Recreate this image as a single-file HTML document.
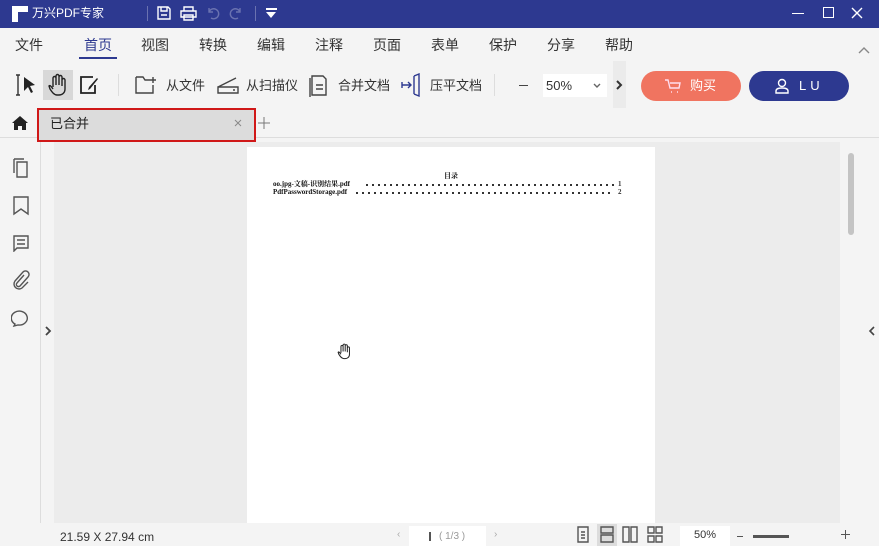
<!DOCTYPE html>
<html><head><meta charset="utf-8"><style>
*{margin:0;padding:0;box-sizing:border-box}
body{width:879px;height:546px;overflow:hidden;background:#f4f4f4;font-family:"Liberation Sans","Noto Sans CJK SC",sans-serif;position:relative;color:#333}
.a{position:absolute}
.t{position:absolute;font-size:13px;white-space:nowrap;line-height:1}
.m{position:absolute;font-size:14px;white-space:nowrap;line-height:1;top:38px}
svg{position:absolute;fill:none;stroke:#444;stroke-width:1.4}
</style></head><body>
<!-- title bar -->
<div class="a" style="left:0;top:0;width:879px;height:28px;background:#2d3990"></div>
<div class="a" style="left:12px;top:6px;width:14px;height:6px;background:#fff"></div>
<div class="a" style="left:12px;top:12px;width:6px;height:10px;background:#fff"></div>
<div class="a" style="left:19px;top:6px;width:9px;height:6px;background:#fff"></div>
<div class="t" style="left:32px;top:7px;color:#fff;font-size:12px">万兴PDF专家</div>
<div class="a" style="left:147px;top:6px;width:1px;height:15px;background:#6a72b0"></div>
<svg style="left:156px;top:5px" width="16" height="16" viewBox="0 0 16 16"><path d="M2 2h10l2 2v10H2z M5 2v4h6V2 M5 10h6" stroke="#fff"/></svg>
<svg style="left:180px;top:5px" width="17" height="16" viewBox="0 0 17 16"><path d="M4 6V2h9v4 M1 6h15v6H1z M4 10h9v5H4z" stroke="#fff"/></svg>
<svg style="left:206px;top:6px" width="14" height="14" viewBox="0 0 14 14"><path d="M3 2v4h4 M3 6a5 5 0 1 1 2 6" stroke="#6a72b0"/></svg>
<svg style="left:229px;top:6px" width="14" height="14" viewBox="0 0 14 14"><path d="M11 2v4H7 M11 6a5 5 0 1 0-2 6" stroke="#6a72b0"/></svg>
<div class="a" style="left:255px;top:6px;width:1px;height:15px;background:#6a72b0"></div>
<div class="a" style="left:266px;top:8px;width:11px;height:2px;background:#fff"></div>
<div class="a" style="left:266px;top:12px;width:0;height:0;border-left:5.5px solid transparent;border-right:5.5px solid transparent;border-top:6px solid #fff"></div>
<div class="a" style="left:792px;top:13px;width:12px;height:1px;background:#fff"></div>
<div class="a" style="left:823px;top:7px;width:11px;height:11px;border:1.3px solid #fff"></div>
<svg style="left:851px;top:7px" width="12" height="12" viewBox="0 0 12 12"><path d="M1 1l10 10M11 1L1 11" stroke="#fff"/></svg>
<!-- menu -->
<div class="m" style="left:15px">文件</div>
<div class="m" style="left:84px;color:#2d3990">首页</div>
<div class="a" style="left:79px;top:57px;width:38px;height:2px;background:#2d3990"></div>
<div class="m" style="left:141px">视图</div>
<div class="m" style="left:199px">转换</div>
<div class="m" style="left:257px">编辑</div>
<div class="m" style="left:315px">注释</div>
<div class="m" style="left:373px">页面</div>
<div class="m" style="left:431px">表单</div>
<div class="m" style="left:489px">保护</div>
<div class="m" style="left:547px">分享</div>
<div class="m" style="left:605px">帮助</div>
<svg style="left:858px;top:46px" width="12" height="8" viewBox="0 0 12 8"><path d="M1 7l5-5 5 5" stroke="#888"/></svg>
<!-- toolbar -->
<svg style="left:14px;top:73px" width="24" height="24" viewBox="0 0 24 24"><path d="M2 2h4M4 2v20M2 22h4" stroke="#333"/><path d="M10 4l11 8-5 1 3 6-2 1-3-6-4 4z" fill="#222" stroke="none"/></svg>
<div class="a" style="left:43px;top:70px;width:30px;height:30px;background:#d8d8d8"></div>
<svg style="left:47px;top:73px" width="22" height="24" viewBox="0 0 22 24"><path d="M6 14V5a1.5 1.5 0 0 1 3 0v7V3a1.5 1.5 0 0 1 3 0v9V4a1.5 1.5 0 0 1 3 0v9V7a1.5 1.5 0 0 1 3 0v9c0 4-3 6-6 6h-2c-3 0-5-3-7-6l-1-3c1-1 2 0 4 3" stroke="#222"/></svg>
<svg style="left:78px;top:74px" width="24" height="22" viewBox="0 0 24 22"><path d="M15 3H3v16h14V11" stroke="#222" stroke-width="1.8"/><path d="M20 5l-8 10-2 1 1-3 8-9z" fill="#222" stroke="none"/></svg>
<div class="a" style="left:118px;top:74px;width:1px;height:22px;background:#ddd"></div>
<svg style="left:134px;top:74px" width="26" height="22" viewBox="0 0 26 22"><path d="M2 3h7l2 3h7 M2 3v16h17v-8 M19 3v6 M16 6h6" stroke="#444"/></svg>
<div class="t" style="left:166px;top:79px">从文件</div>
<svg style="left:216px;top:75px" width="24" height="20" viewBox="0 0 24 20"><path d="M2 12L20 3 M2 12h20v6H2z M17 15h2" stroke="#444"/></svg>
<div class="t" style="left:246px;top:79px">从扫描仪</div>
<svg style="left:309px;top:73px" width="20" height="24" viewBox="0 0 20 24"><path d="M3 3h11l3 3v16H3z M1 5v19 M7 12h7M7 16h7" stroke="#444"/></svg>
<div class="t" style="left:338px;top:79px">合并文档</div>
<svg style="left:400px;top:73px" width="22" height="24" viewBox="0 0 22 24"><path d="M14 3l5-2v22l-5-2 M14 3v18 M2 12h9M8 9l3 3-3 3 M2 9v6" stroke="#2d3990"/></svg>
<div class="t" style="left:430px;top:79px">压平文档</div>
<div class="a" style="left:494px;top:74px;width:1px;height:22px;background:#ddd"></div>
<div class="a" style="left:519px;top:85px;width:9px;height:1px;background:#444"></div>
<div class="a" style="left:543px;top:74px;width:64px;height:23px;background:#fff"></div>
<div class="t" style="left:546px;top:79px">50%</div>
<svg style="left:593px;top:83px" width="8" height="6" viewBox="0 0 8 6"><path d="M1 1l3 3 3-3" stroke="#666"/></svg>
<div class="a" style="left:613px;top:61px;width:13px;height:47px;background:#ebebeb"></div>
<svg style="left:615px;top:80px" width="8" height="10" viewBox="0 0 8 10"><path d="M2 1l4 4-4 4" stroke="#333" stroke-width="2"/></svg>
<div class="a" style="left:641px;top:71px;width:100px;height:30px;border-radius:15px;background:#f07460"></div>
<svg style="left:664px;top:78px" width="18" height="16" viewBox="0 0 18 16"><path d="M1 2h3l2 8h9l1-5H6 M7 14h1M13 14h1" stroke="#fde"/></svg>
<div class="t" style="left:690px;top:79px;color:#fff">购买</div>
<div class="a" style="left:749px;top:71px;width:100px;height:30px;border-radius:15px;background:#2d3990"></div>
<svg style="left:775px;top:78px" width="14" height="16" viewBox="0 0 14 16"><circle cx="7" cy="5" r="3.5" stroke="#fff"/><path d="M1 15v-2c0-2 2-3 6-3s6 1 6 3v2z" stroke="#fff"/></svg>
<div class="t" style="left:799px;top:79px;color:#fff;letter-spacing:4px">LU</div>
<!-- tabs -->
<div class="a" style="left:0;top:137px;width:879px;height:1px;background:#ddd"></div>
<svg style="left:11px;top:115px" width="18" height="16" viewBox="0 0 18 16"><path d="M9 1L1 8h2v7h4v-4h4v4h4V8h2z" fill="#222" stroke="none"/></svg>
<div class="a" style="left:37px;top:108px;width:219px;height:34px;border:2.5px solid #d01818;background:#dcdcdc"></div>
<div class="t" style="left:50px;top:117px;color:#222">已合并</div>
<svg style="left:234px;top:119px" width="8" height="8" viewBox="0 0 8 8"><path d="M1 1l6 6M7 1L1 7" stroke="#888" stroke-width="1"/></svg>
<svg style="left:258px;top:117px" width="12" height="12" viewBox="0 0 12 12"><path d="M6 0v12M0 6h12" stroke="#777" stroke-width="1"/></svg>
<!-- sidebar -->
<div class="a" style="left:40px;top:142px;width:1px;height:381px;background:#ddd"></div>
<svg style="left:12px;top:158px" width="18" height="20" viewBox="0 0 18 20"><path d="M2 1h10 M2 1v14 M5 4h10v15H5z" stroke="#555"/></svg>
<svg style="left:13px;top:196px" width="16" height="20" viewBox="0 0 16 20"><path d="M1 1h14v17l-7-5-7 5z" stroke="#555"/></svg>
<svg style="left:12px;top:234px" width="18" height="18" viewBox="0 0 18 18"><path d="M2 2h14v12H5l-3 3z M5 6h8M5 10h8" stroke="#555"/></svg>
<svg style="left:12px;top:270px" width="18" height="20" viewBox="0 0 18 20"><path d="M12 5l-7 8a2 2 0 0 0 3 3l8-9a3.5 3.5 0 0 0-5-5L3 11a5 5 0 0 0 7 7l6-6" stroke="#555"/></svg>
<svg style="left:11px;top:307px" width="20" height="20" viewBox="0 0 20 20"><path d="M4 17a8 7 0 1 1 3 1l-4 1z" stroke="#555"/></svg>
<svg style="left:44px;top:326px" width="8" height="10" viewBox="0 0 8 10"><path d="M2 1l4 4-4 4" stroke="#444" stroke-width="1.8"/></svg>
<!-- canvas -->
<div class="a" style="left:54px;top:142px;width:786px;height:381px;background:#ececec"></div>
<div class="a" style="left:247px;top:147px;width:408px;height:376px;background:#fff"></div>
<div class="t" style="left:444px;top:173px;font-size:7px;font-family:'Liberation Serif','Noto Serif CJK SC',serif;color:#111;font-weight:bold">目录</div>
<div class="t" style="left:273px;top:181px;font-size:7px;font-family:'Liberation Serif','Noto Serif CJK SC',serif;color:#111;font-weight:bold">oo.jpg-文稿-识别结果.pdf</div>
<div class="t" style="left:273px;top:189px;font-size:7px;font-family:'Liberation Serif',serif;color:#111;font-weight:bold">PdfPasswordStorage.pdf</div>
<div class="a" style="left:366px;top:184px;width:248px;height:2px;background:repeating-linear-gradient(90deg,#333 0 2px,transparent 2px 6px)"></div>
<div class="a" style="left:356px;top:192px;width:258px;height:2px;background:repeating-linear-gradient(90deg,#333 0 2px,transparent 2px 6px)"></div>
<div class="t" style="left:618px;top:181px;font-size:7px;font-family:'Liberation Serif',serif;font-weight:bold">1</div>
<div class="t" style="left:618px;top:189px;font-size:7px;font-family:'Liberation Serif',serif;font-weight:bold">2</div>
<svg style="left:336px;top:343px" width="17" height="17" viewBox="0 0 22 24"><path d="M6 14V5a1.5 1.5 0 0 1 3 0v7V3a1.5 1.5 0 0 1 3 0v9V4a1.5 1.5 0 0 1 3 0v9V7a1.5 1.5 0 0 1 3 0v9c0 4-3 6-6 6h-2c-3 0-5-3-7-6l-1-3c1-1 2 0 4 3" stroke="#222" fill="#fff"/></svg>
<div class="a" style="left:840px;top:142px;width:39px;height:381px;background:#f4f4f4"></div>
<div class="a" style="left:848px;top:153px;width:6px;height:82px;border-radius:3px;background:#c4c4c4"></div>
<svg style="left:868px;top:326px" width="8" height="10" viewBox="0 0 8 10"><path d="M6 1L2 5l4 4" stroke="#444" stroke-width="1.6"/></svg>
<!-- status -->
<div class="t" style="left:60px;top:531px;font-size:12px">21.59 X 27.94 cm</div>
<div class="a" style="left:409px;top:526px;width:77px;height:20px;background:#fff"></div>
<div class="t" style="left:397px;top:530px;font-size:10px;color:#aaa">‹</div>
<div class="a" style="left:429px;top:532px;width:2px;height:9px;background:#555"></div>
<div class="t" style="left:439px;top:532px;font-size:10px;color:#999">( 1/3 )</div>
<div class="t" style="left:494px;top:530px;font-size:10px;color:#aaa">›</div>
<svg style="left:577px;top:526px" width="12" height="17" viewBox="0 0 12 17"><path d="M1 1h10v15H1z M4 6h4M4 9h4M4 12h4" stroke="#555"/></svg>
<div class="a" style="left:597px;top:524px;width:20px;height:22px;background:#dcdcdc"></div>
<svg style="left:600px;top:526px" width="14" height="17" viewBox="0 0 14 17"><path d="M1 1h12v6H1z M1 9h12v7H1z" stroke="#555"/></svg>
<svg style="left:622px;top:526px" width="16" height="17" viewBox="0 0 16 17"><path d="M1 1h6v15H1z M9 1h6v15H9z" stroke="#555"/></svg>
<svg style="left:647px;top:526px" width="16" height="17" viewBox="0 0 16 17"><path d="M1 1h6v6H1z M9 1h6v6H9z M1 10h6v6H1z M9 10h6v6H9z" stroke="#555"/></svg>
<div class="a" style="left:680px;top:526px;width:50px;height:20px;background:#fff"></div>
<div class="t" style="left:694px;top:530px;font-size:11px">50%</div>
<div class="a" style="left:737px;top:536px;width:6px;height:1px;background:#555"></div>
<div class="a" style="left:753px;top:535px;width:36px;height:3px;background:#555"></div>
<svg style="left:841px;top:530px" width="9" height="9" viewBox="0 0 9 9"><path d="M4.5 0v9M0 4.5h9" stroke="#555" stroke-width="1"/></svg>
</body></html>
